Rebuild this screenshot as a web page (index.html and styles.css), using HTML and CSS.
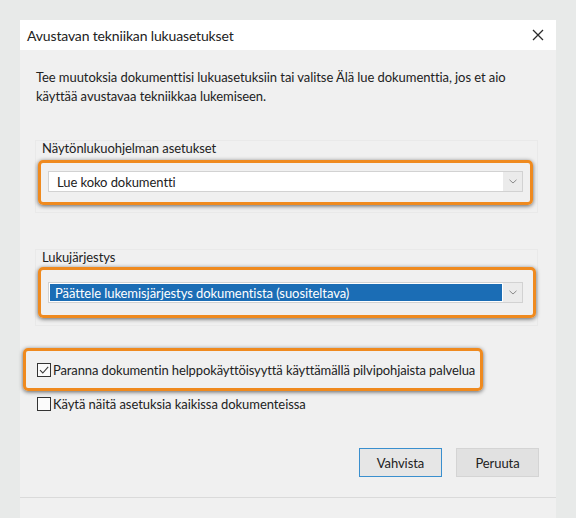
FILE: index.html
```html
<!DOCTYPE html>
<html lang="fi">
<head>
<meta charset="utf-8">
<title>Avustavan tekniikan lukuasetukset</title>
<link rel="stylesheet" href="styles.css">
</head>
<body>
<div class="dialog">
  <div class="titlebar">
    <span class="title">Avustavan tekniikan lukuasetukset</span>
    <svg class="close" width="12" height="12" viewBox="0 0 12 12"><path d="M1 1L11 11M11 1L1 11" stroke="#2b2b2b" stroke-width="1.3" fill="none"/></svg>
  </div>
  <div class="content">
    <p class="intro">Tee muutoksia dokumenttisi lukuasetuksiin tai valitse Älä lue dokumenttia, jos et aio<br>käyttää avustavaa tekniikkaa lukemiseen.</p>

    <div class="group g1">
      <div class="group-label">Näytönlukuohjelman asetukset</div>
      <div class="highlight h1">
        <div class="select">
          <span class="select-value">Lue koko dokumentti</span>
          <span class="select-arrow"><svg width="8" height="5" viewBox="0 0 8 5"><path d="M0.5 0.8L4 4L7.5 0.8" stroke="#8a8a8a" stroke-width="1" fill="none"/></svg></span>
        </div>
      </div>
    </div>

    <div class="group g2">
      <div class="group-label">Lukujärjestys</div>
      <div class="highlight h2">
        <div class="select">
          <span class="select-value selected">Päättele lukemisjärjestys dokumentista (suositeltava)</span>
          <span class="select-arrow"><svg width="8" height="5" viewBox="0 0 8 5"><path d="M0.5 0.8L4 4L7.5 0.8" stroke="#8a8a8a" stroke-width="1" fill="none"/></svg></span>
        </div>
      </div>
    </div>

    <div class="highlight h3">
      <div class="check">
        <span class="box"><svg width="12" height="12" viewBox="0 0 12 12"><path d="M2 6.2L4.8 9L10.2 2.8" stroke="#3a3a3a" stroke-width="1.1" fill="none"/></svg></span>
        <span class="check-label">Paranna dokumentin helppokäyttöisyyttä käyttämällä pilvipohjaista palvelua</span>
      </div>
    </div>

    <div class="check plain">
      <span class="box"></span>
      <span class="check-label">Käytä näitä asetuksia kaikissa dokumenteissa</span>
    </div>

    <div class="buttons">
      <div class="btn primary">Vahvista</div>
      <div class="btn">Peruuta</div>
    </div>
  </div>
  <div class="footer"></div>
</div>
</body>
</html>
```

FILE: styles.css
```css
html, body {
  margin: 0;
  padding: 0;
}
body {
  background: #e8eae9;
  font-family: Lato, "Open Sans", sans-serif;
  font-size: 13px;
  letter-spacing: -0.07px;
  color: #222;
  height: 518px;
  overflow: hidden;
}
.dialog {
  margin: 20px 20px 0 20px;
  width: 536px;
  height: 498px;
  background: #f0f0f0;
  display: flex;
  flex-direction: column;
}
.titlebar {
  height: 30px;
  background: #fff;
  display: flex;
  align-items: center;
  justify-content: space-between;
  padding: 0 12px 0 7px;
}
.title {
  font-size: 14px;
  letter-spacing: -0.15px;
  color: #222;
}
.close {
  display: block;
}
.content {
  padding: 0 18px 0 15px;
  display: flex;
  flex-direction: column;
}
.intro {
  margin: 18px 0 0 0;
  padding-left: 1px;
  line-height: 19px;
}
.group {
  border: 1px solid #e9e9e9;
  padding: 0 0 7px 0;
  display: flex;
  flex-direction: column;
}
.g1 {
  margin-top: 34px;
}
.g2 {
  margin-top: 36px;
}
.group-label {
  line-height: 14px;
  padding-left: 6px;
}
.highlight {
  border: 3px solid #ef8a1f;
  border-radius: 5px;
  box-shadow: 0 1px 4px rgba(0, 0, 0, 0.6);
}
.h1 {
  margin: 5px 4px 0 2px;
  padding: 8px 7px 10px 7px;
}
.h2 {
  margin: 3px 1px 0 2px;
  padding: 12px 10px 12px 7px;
}
.select {
  height: 21px;
  box-sizing: border-box;
  border: 1px solid #d2d2d2;
  background: #fff;
  display: flex;
  align-items: stretch;
}
.select-value {
  flex: 1;
  display: flex;
  align-items: center;
  padding-left: 7px;
  margin: 1px;
}
.select-value.selected {
  background: #1b6db5;
  color: #fff;
  padding-left: 5px;
}
.select-arrow {
  width: 19px;
  background: #ebebeb;
  display: flex;
  align-items: center;
  justify-content: center;
}
.select-arrow svg {
  display: block;
}
.h3 {
  margin: 22px 0 0 -12px;
  width: 460px;
  box-sizing: border-box;
  height: 43px;
  padding-left: 11px;
  display: flex;
  align-items: center;
}
.h3 .check-label {
  letter-spacing: -0.12px;
}
.check {
  display: flex;
  align-items: center;
  white-space: nowrap;
}
.box {
  width: 14px;
  height: 14px;
  flex: none;
  box-sizing: border-box;
  border: 1px solid #333;
  background: #fbfbfb;
  margin-right: 2px;
  display: flex;
  align-items: center;
  justify-content: center;
}
.box svg {
  display: block;
}
.plain {
  margin: 5px 0 0 2px;
  height: 16px;
}
.buttons {
  margin-top: 36px;
  margin-right: -1px;
  display: flex;
  justify-content: flex-end;
  gap: 14px;
}
.btn {
  width: 83px;
  height: 29px;
  box-sizing: border-box;
  display: flex;
  align-items: center;
  justify-content: center;
  background: #e1e1e1;
  border: 1px solid #d4d4d4;
  color: #222;
}
.btn.primary {
  background: #e6e6e6;
  border: 1px solid #3a8fce;
}
.footer {
  margin-top: 20px;
  border-top: 1px solid #dadada;
  flex: 1;
}
```
